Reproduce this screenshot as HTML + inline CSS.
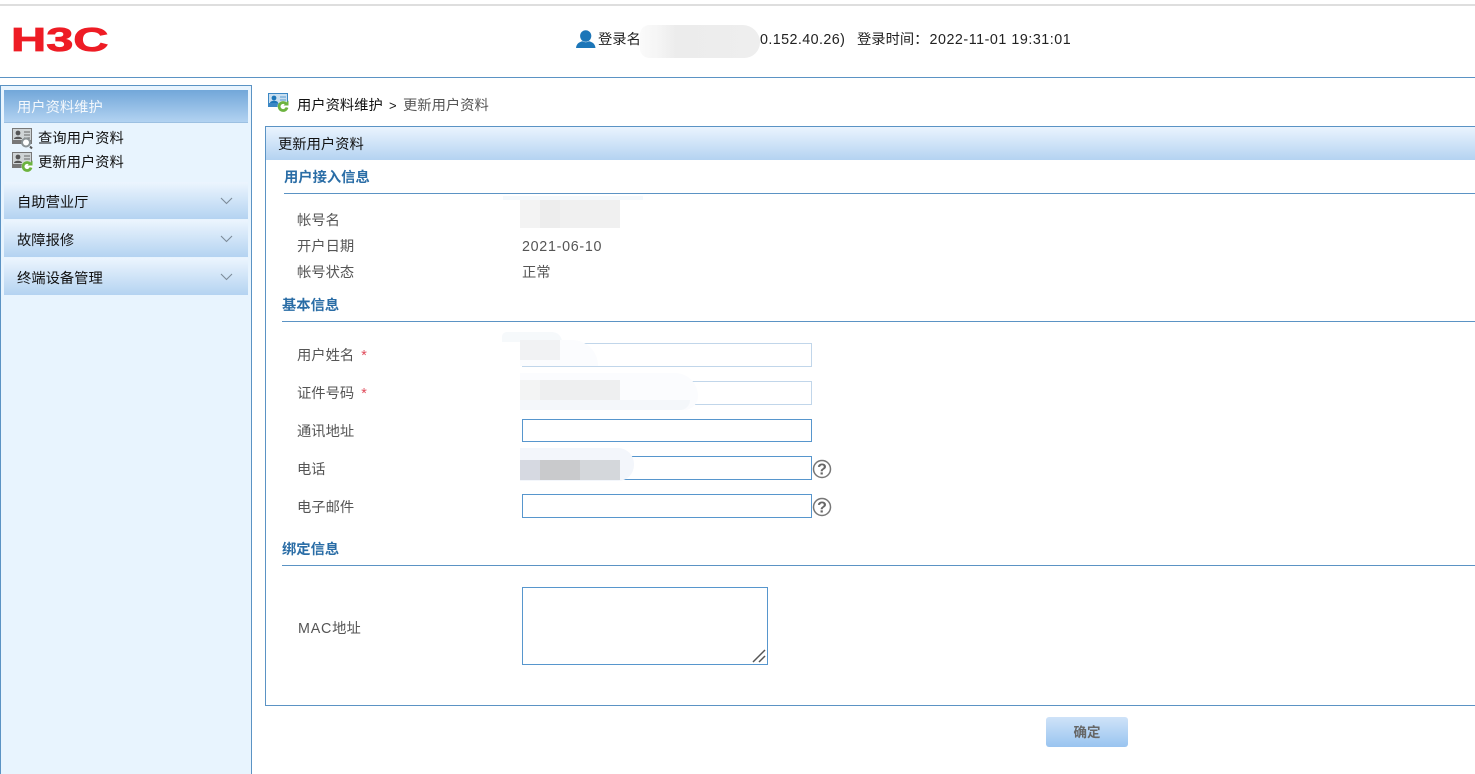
<!DOCTYPE html>
<html lang="zh-CN">
<head>
<meta charset="utf-8">
<title>更新用户资料</title>
<style>
*{box-sizing:border-box;margin:0;padding:0}
html,body{width:1475px;height:774px;overflow:hidden;background:#fff}
body{position:relative;font-family:"Liberation Sans","Noto Sans CJK SC",sans-serif;font-size:14.3px;color:#111}
.a{position:absolute}
.t{position:absolute;white-space:nowrap;line-height:20px;height:20px;margin-top:1px}
.lab{color:#555;left:297px}
.val{color:#555;left:522px}
.sec{color:#2a6da6;font-weight:700}
.line{position:absolute;height:1px;background:#5b93c4;right:0}
.acc{position:absolute;left:4px;width:244px;height:37px;background:linear-gradient(#ecf5fe,#b4d3f1)}
.inp{position:absolute;left:522px;width:290px;border:1px solid #5796cd;background:#fff}
.inp.l{border-color:#c1d6ea}
.pa{position:absolute;background:#f1f2f3}
</style>
</head>
<body>
<div class="a" style="left:0;top:4px;width:1475px;height:2px;background:#dedede"></div>
<svg class="a" style="left:10px;top:24px" width="102" height="30" viewBox="0 0 102 30">
  <text x="0" y="0" transform="translate(1 27) scale(1.5 1.19)" font-family="Liberation Sans" font-weight="700" font-size="28" fill="#ee1c25" stroke="#ee1c25" stroke-width=".7" textLength="65" lengthAdjust="spacingAndGlyphs">H3C</text>
</svg>

<svg class="a" style="left:576px;top:30px" width="20" height="18" viewBox="0 0 20 18">
  <ellipse cx="9.7" cy="6" rx="5.6" ry="5.8" fill="#1c76b8"/>
  <path d="M0 18C.5 13.5 3.5 12 6.5 11.3 8.5 12.6 11 12.6 13 11.3 16 12 19 13.5 19.500 18Z" fill="#1c76b8"/>
</svg>
<div class="t" style="left:598px;top:29px;color:#222">登录名</div>
<div class="t" style="left:760px;top:29px;color:#222;letter-spacing:.42px">0.152.40.26)</div>
<div class="t" style="left:857px;top:29px;color:#222">登录时间：<span style="letter-spacing:.53px;margin-left:1px">2022-11-01 19:31:01</span></div>
<div class="a" style="left:640px;top:25px;width:120px;height:33px;background:linear-gradient(90deg,#fafafa 0,#f5f5f5 15%,#ececec 30%,#eeeeee 100%);border-radius:12px 22px 20px 12px"></div>

<div class="a" style="left:0;top:77px;width:1475px;height:1px;background:#5b93c4"></div>

<!-- sidebar -->
<div class="a" style="left:0;top:85px;width:252px;height:700px;background:#e8f4fe;border:1px solid #5b93c4"></div>
<div class="a" style="left:4px;top:90px;width:244px;height:33px;background:linear-gradient(#72a7d9,#b2d2f1);border-bottom:1px solid #9cc0e2"></div>
<div class="t" style="left:17px;top:97px;color:#f4f8fc">用户资料维护</div>

<svg class="a" style="left:12px;top:128px" width="22" height="22" viewBox="0 0 22 22">
  <rect x=".5" y=".5" width="19" height="15" fill="#cfd4d6" stroke="#777"/>
  <rect x="1" y="12" width="18" height="4" fill="#777"/>
  <circle cx="6" cy="5" r="2.400" fill="#555"/><path d="M2 11c0-3 8-3 8 0z" fill="#555"/>
  <path d="M12 4h6M12 7h6M12 10h6" stroke="#666"/>
  <circle cx="14" cy="14.500" r="4" fill="#fff" stroke="#8b9396" stroke-width="2"/>
  <path d="M18 18.500l2 2" stroke="#555" stroke-width="2"/>
</svg>
<div class="t" style="left:38px;top:128px">查询用户资料</div>
<svg class="a" style="left:12px;top:152px" width="22" height="22" viewBox="0 0 22 22">
  <rect x=".5" y=".5" width="19" height="15" fill="#cfd4d6" stroke="#777"/>
  <rect x="1" y="12" width="18" height="4" fill="#777"/>
  <circle cx="6" cy="5" r="2.400" fill="#555"/><path d="M2 11c0-3 8-3 8 0z" fill="#555"/>
  <path d="M12 4h6M12 7h6" stroke="#666"/>
  <circle cx="15" cy="14.500" r="5.500" fill="#fff"/>
  <path d="M18.400 12.200A4 4 0 1 0 19 15.500" fill="none" stroke="#6cb33f" stroke-width="2.800"/>
  <path d="M20.500 8.500v5h-5z" fill="#6cb33f"/>
</svg>
<div class="t" style="left:38px;top:152px">更新用户资料</div>

<div class="acc" style="top:182px"></div>
<div class="acc" style="top:220px"></div>
<div class="acc" style="top:258px"></div>
<div class="t" style="left:17px;top:192px">自助营业厅</div>
<div class="t" style="left:17px;top:230px">故障报修</div>
<div class="t" style="left:17px;top:268px">终端设备管理</div>
<svg class="a" style="left:220px;top:197px" width="13" height="90" viewBox="0 0 13 90" fill="none" stroke="#7d8b99" stroke-width="1.100">
  <path d="M1 1l5.500 5.500L12 1M1 39l5.500 5.500L12 39M1 77l5.500 5.500L12 77"/>
</svg>

<!-- breadcrumb -->
<svg class="a" style="left:268px;top:93px" width="22" height="20" viewBox="0 0 22 20">
  <rect x=".5" y=".5" width="19" height="13" fill="#c9dff0" stroke="#3b87c4"/>
  <rect x="1" y="10" width="18" height="4" fill="#3b87c4"/>
  <circle cx="6" cy="5" r="2.400" fill="#1c76b8"/><path d="M2 10c0-3 8-3 8 0z" fill="#1c76b8"/>
  <path d="M12 4h6M12 7h6" stroke="#5b9bd0"/>
  <circle cx="15" cy="13.500" r="5.500" fill="#fff"/>
  <path d="M18.400 11.200A4 4 0 1 0 19 14.500" fill="none" stroke="#6cb33f" stroke-width="2.800"/>
  <path d="M20.500 7.500v5h-5z" fill="#6cb33f"/>
</svg>
<div class="t" style="left:297px;top:95px">用户资料维护</div>
<div class="t" style="left:389px;top:95px;font-size:13px">&gt;</div>
<div class="t" style="left:403px;top:95px;color:#555">更新用户资料</div>

<!-- panel -->
<div class="a" style="left:265px;top:126px;width:1220px;height:580px;border:1px solid #5b93c4;background:#fff"></div>
<div class="a" style="left:266px;top:127px;width:1209px;height:33px;background:linear-gradient(#eaf4fe,#b4d3f1)"></div>
<div class="t" style="left:278px;top:134px">更新用户资料</div>

<div class="t sec" style="left:284px;top:167px">用户接入信息</div>
<div class="line" style="left:284px;top:193px"></div>
<div class="t lab" style="top:210px">帐号名</div>
<div class="t lab" style="top:236px">开户日期</div>
<div class="t val" style="top:236px;letter-spacing:.7px">2021-06-10</div>
<div class="t lab" style="top:262px">帐号状态</div>
<div class="t val" style="top:262px">正常</div>
<div class="a" style="left:503px;top:196px;width:140px;height:4px;background:#f5f9fc"></div>
<div class="pa" style="left:520px;top:200px;width:100px;height:28px;background:linear-gradient(90deg,#f3f3f3 0 20%,#ededed 20% 40%,#f0f0f0 40%)"></div>

<div class="t sec" style="left:282px;top:295px">基本信息</div>
<div class="line" style="left:282px;top:321px"></div>
<div class="t lab" style="top:345px">用户姓名<span style="color:#e04a5a;margin-left:7px">*</span></div>
<div class="t lab" style="top:383px">证件号码<span style="color:#e04a5a;margin-left:7px">*</span></div>
<div class="t lab" style="top:421px">通讯地址</div>
<div class="t lab" style="top:459px">电话</div>
<div class="t lab" style="top:497px">电子邮件</div>

<div class="inp l" style="top:343px;height:24px"></div>
<div class="inp l" style="top:381px;height:24px"></div>
<div class="inp" style="top:419px;height:23px"></div>
<div class="inp" style="top:456px;height:24px"></div>
<div class="inp" style="top:494px;height:24px"></div>

<div class="a" style="left:502px;top:332px;width:60px;height:10px;background:#f6f9fb;border-radius:14px 30px 0 0"></div>
<div class="a" style="left:520px;top:340px;width:78px;height:26px;background:#fbfcfe;border-radius:0 34px 0 0"></div>
<div class="pa" style="left:520px;top:340px;width:40px;height:20px"></div>
<div class="a" style="left:520px;top:373px;width:178px;height:37px;background:#fbfcfe;border-radius:0 30px 18px 0"></div>
<div class="a" style="left:520px;top:400px;width:170px;height:10px;background:#f4f7fa;border-radius:0 0 20px 0"></div>
<div class="pa" style="left:520px;top:380px;width:100px;height:20px;background:linear-gradient(90deg,#f3f4f4 0 20%,#eeeff0 20%)"></div>
<div class="a" style="left:520px;top:448px;width:114px;height:33px;background:#f3f6fb;border-radius:0 16px 16px 0"></div>
<div class="a" style="left:520px;top:460px;width:100px;height:20px;background:linear-gradient(90deg,#d6d9e1 0 20%,#c9cacc 20% 60%,#d4d7db 60%)"></div>

<svg class="a" style="left:812px;top:459px" width="20" height="20" viewBox="0 0 20 20">
  <circle cx="10" cy="10" r="8.500" fill="#fff" stroke="#777" stroke-width="1.500"/>
  <text x="10" y="15.500" text-anchor="middle" font-family="Liberation Sans" font-weight="700" font-size="16" fill="#666">?</text>
</svg>
<svg class="a" style="left:812px;top:497px" width="20" height="20" viewBox="0 0 20 20">
  <circle cx="10" cy="10" r="8.500" fill="#fff" stroke="#777" stroke-width="1.500"/>
  <text x="10" y="15.500" text-anchor="middle" font-family="Liberation Sans" font-weight="700" font-size="16" fill="#666">?</text>
</svg>

<div class="t sec" style="left:282px;top:539px">绑定信息</div>
<div class="line" style="left:282px;top:565px"></div>
<div class="t lab" style="top:618px;left:298px"><span style="letter-spacing:.8px">MAC</span>地址</div>
<div class="a" style="left:522px;top:587px;width:246px;height:78px;border:1px solid #5796cd;background:#fff"></div>
<svg class="a" style="left:752px;top:649px" width="14" height="14" viewBox="0 0 14 14" stroke="#555" stroke-width="1.500">
  <path d="M1 13L13 1M7 13l6-6"/>
</svg>

<div class="t" style="left:1046px;top:717px;width:82px;height:30px;line-height:32px;margin-top:0;text-align:center;border-radius:3px;background:linear-gradient(#cfe3f8,#99c4f0);color:#666;font-weight:700;font-size:13.500px">确定</div>
</body>
</html>
